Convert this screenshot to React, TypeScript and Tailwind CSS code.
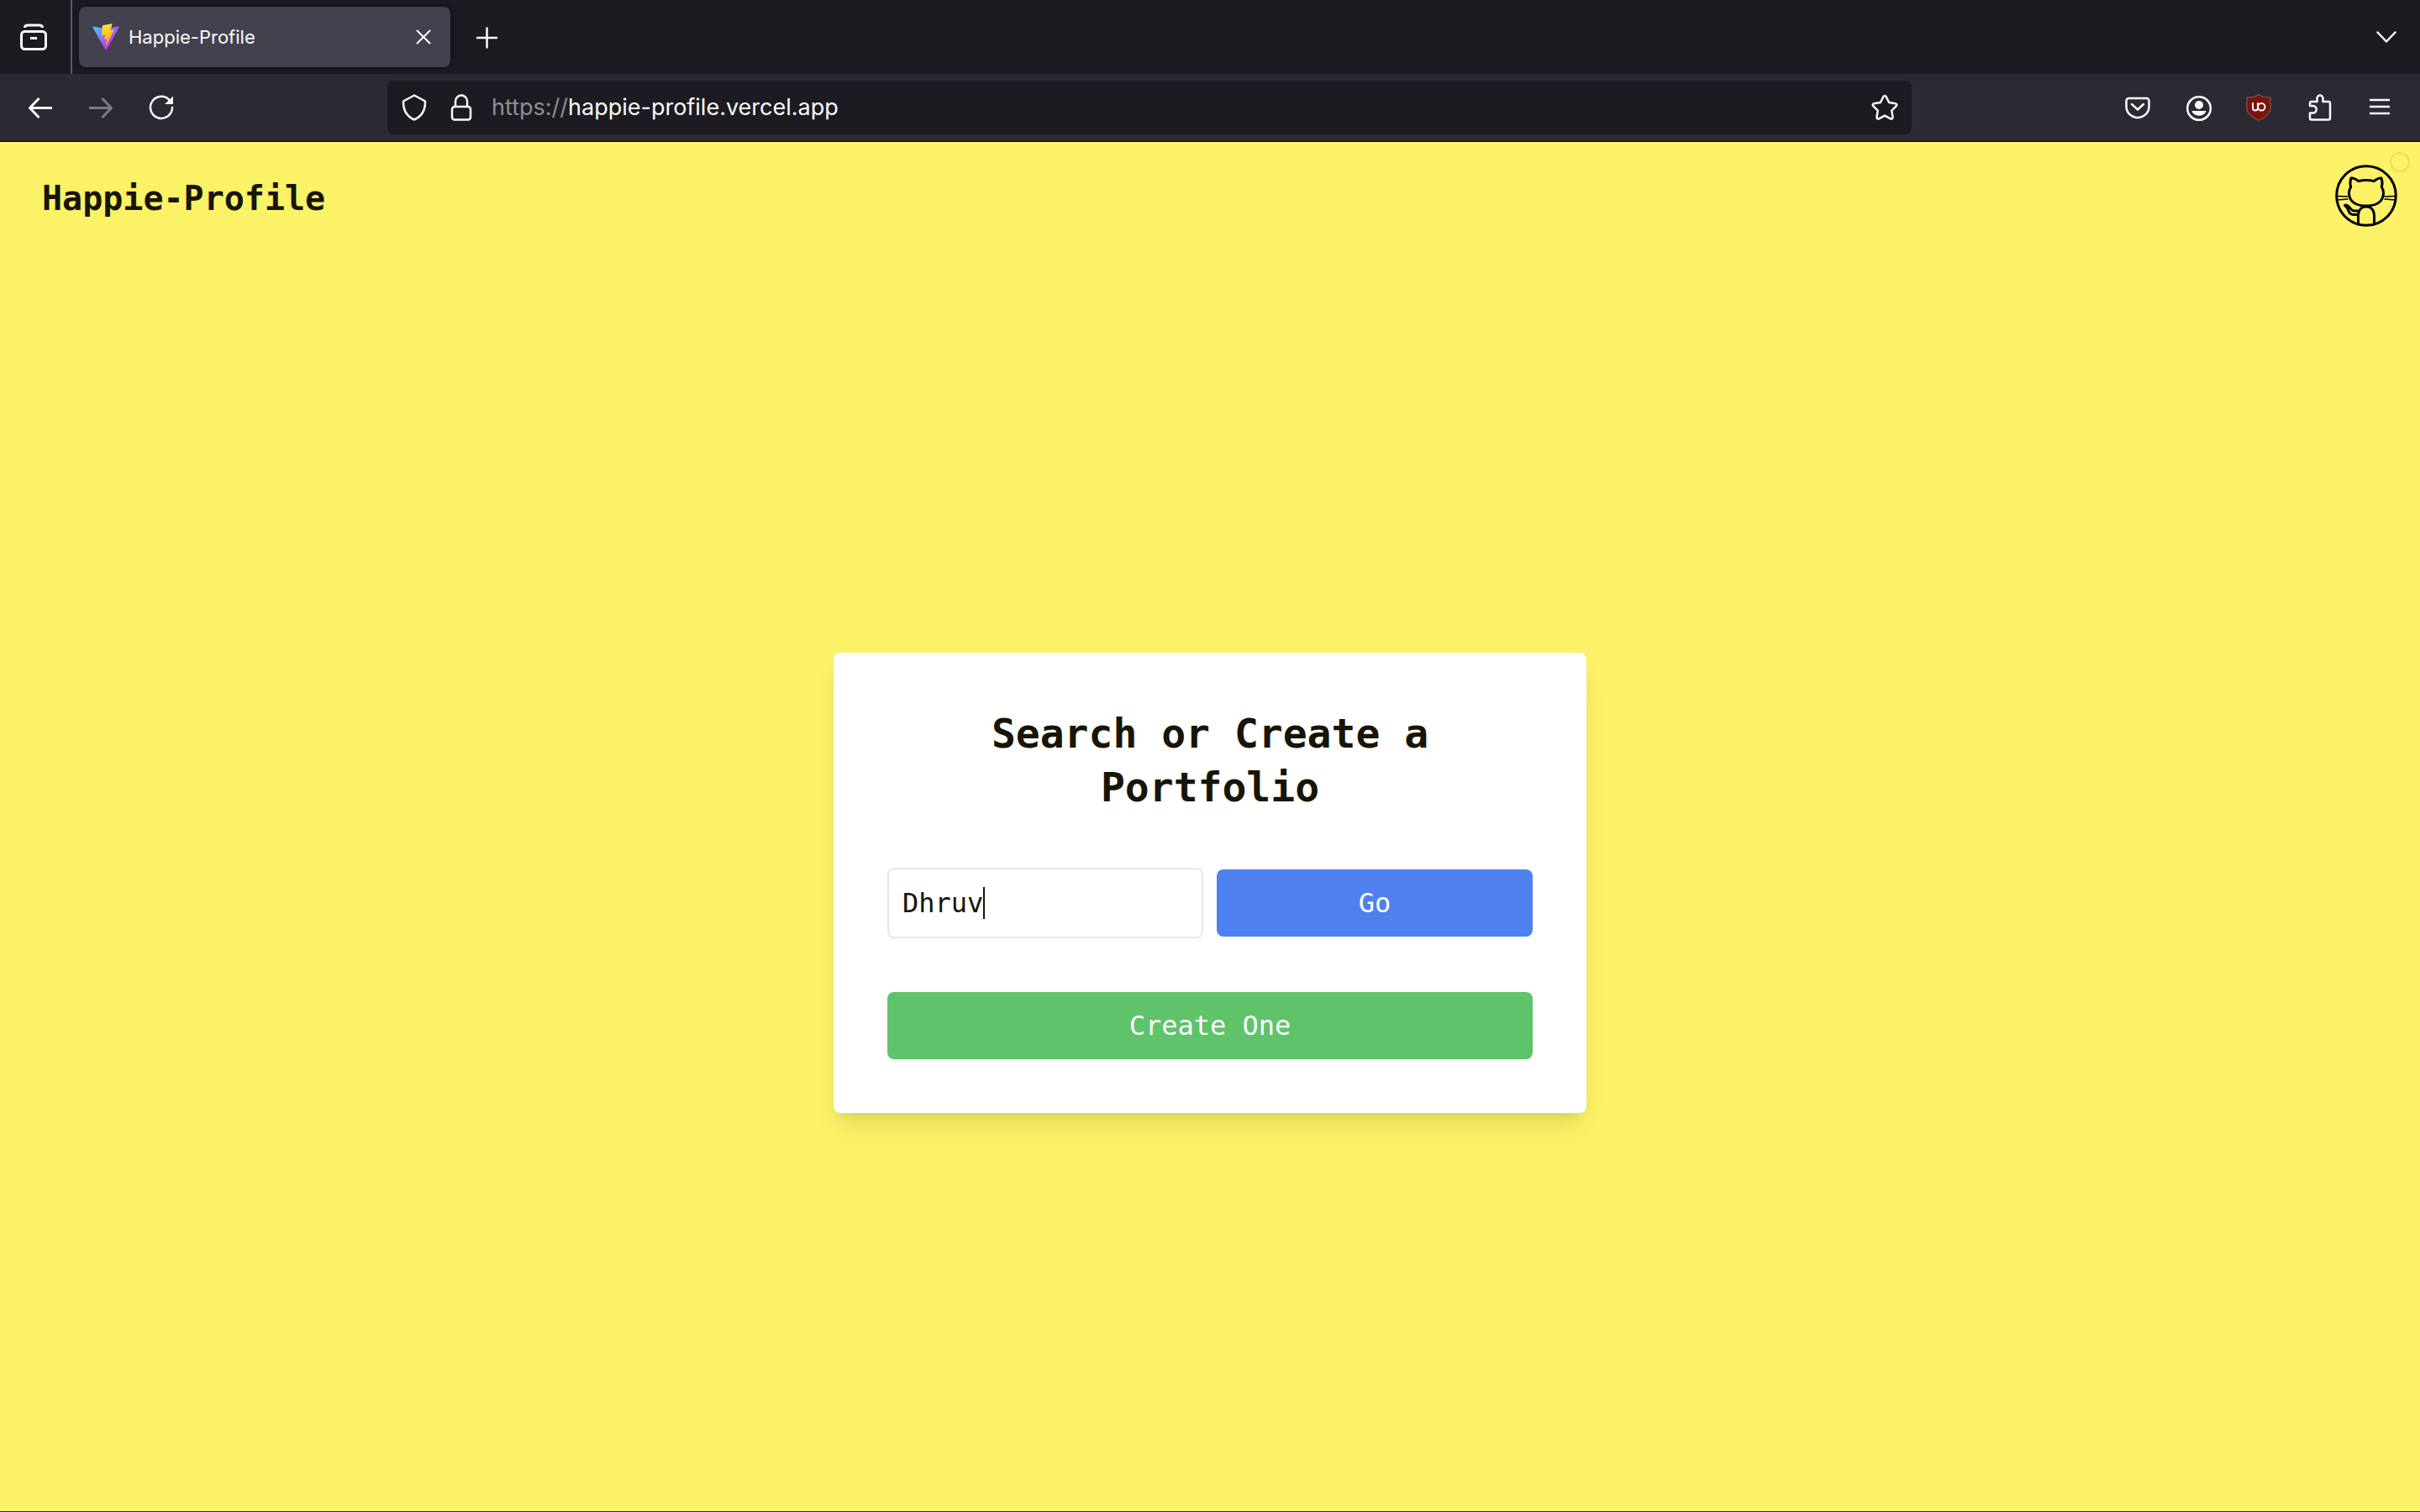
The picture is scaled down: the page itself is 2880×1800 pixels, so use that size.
import React from "react";

const iconStroke = {
  fill: "none",
  stroke: "currentColor",
  strokeWidth: 3,
  strokeLinecap: "round" as const,
  strokeLinejoin: "round" as const,
};

function Icon({ children, className = "" }: { children: React.ReactNode; className?: string }) {
  return (
    <svg viewBox="0 0 32 32" className={`block size-8 shrink-0 ${className}`} aria-hidden="true" {...iconStroke}>
      {children}
    </svg>
  );
}

function ViteLogo() {
  return (
    <svg viewBox="6 0 398 398" className="block size-8 shrink-0" aria-hidden="true">
      <defs>
        <linearGradient id="vite-body" gradientUnits="userSpaceOnUse" x1="6" y1="33" x2="235" y2="344">
          <stop offset="0" stopColor="#41d1ff" />
          <stop offset="1" stopColor="#bd34fe" />
        </linearGradient>
        <linearGradient id="vite-bolt" gradientUnits="userSpaceOnUse" x1="195" y1="9" x2="236" y2="293">
          <stop offset="0" stopColor="#ffea83" />
          <stop offset="0.083" stopColor="#ffdd35" />
          <stop offset="1" stopColor="#ffa800" />
        </linearGradient>
      </defs>
      <path
        d="M399.641 59.525 215.643 388.545c-3.799 6.793-13.559 6.833-17.415.073L10.582 59.556c-4.201-7.366 2.098-16.289 10.446-14.797l184.195 32.923a10 10 0 0 0 3.553-.006l180.343-32.870c8.320-1.517 14.649 7.337 10.522 14.719Z"
        fill="url(#vite-body)"
      />
      <path
        d="M292.965 1.574 156.801 28.255a5 5 0 0 0-4.030 4.611l-8.376 141.464c-.197 3.332 2.863 5.918 6.115 5.168l37.910-8.749c3.547-.818 6.752 2.306 6.023 5.873l-11.263 55.153c-.758 3.712 2.727 6.886 6.352 5.785l23.415-7.114c3.630-1.102 7.118 2.081 6.350 5.796l-17.899 86.633c-1.120 5.419 6.088 8.374 9.094 3.728l2.008-3.103 110.954-221.428c1.858-3.708-1.346-7.935-5.418-7.149l-39.022 7.531c-3.667.707-6.787-2.708-5.752-6.296l25.469-88.291c1.036-3.594-2.095-7.012-5.766-6.293Z"
        fill="url(#vite-bolt)"
      />
    </svg>
  );
}

function OctocatMark() {
  return (
    <svg viewBox="0 0 74 74" className="block size-[74px]" aria-hidden="true" fill="none" stroke="#000" strokeWidth="3" strokeLinecap="round" strokeLinejoin="round">
      <circle cx="37" cy="37" r="35.300" />
      <path d="M19 16c3-.5 6 1.500 9 3.700 5-1.700 13-1.700 18 0 3-2.200 6-4.200 9-3.700 1.300 4 1.300 7.500.3 10.500 2 3 2.700 7 1.700 11-2 8-10 11.500-20 11.500s-18-3.500-20-11.500c-1-4-.3-8 1.700-11-1-3-1-6.500.3-10.500Z" />
      <path d="M27.500 71V61c0-7 3.500-11 9.500-11s9.500 4 9.500 11v10M27 59.500h-6c-6 0-4-7.500-9.500-11M27 55h-4.500c-4.500 0-4-5.500-10-7" />
      <path strokeWidth="1.500" d="M3 37.500 15 38M3 42l12-1M59 38l12-.5M59 41l12 1" />
    </svg>
  );
}

function ToolbarButton({ label, children, className = "" }: { label: string; children: React.ReactNode; className?: string }) {
  return (
    <button type="button" aria-label={label} className={`grid size-8 shrink-0 place-items-center ${className}`}>
      {children}
    </button>
  );
}

function TabBar() {
  return (
    <div className="flex h-[88px] items-center bg-[#1c1b22] text-[#fbfbfe]">
      <div className="flex h-full w-[86px] shrink-0 items-center border-r-2 border-[#5b5a63] pl-6">
        <ToolbarButton label="Firefox View">
          <Icon>
            <rect x="1.500" y="9.500" width="29" height="21" rx="4" />
            <path strokeLinecap="butt" d="M5.500 5c0-2 1.500-3 3.500-3h14c2 0 3.500 1 3.500 3M12 17.500h8" />
          </Icon>
        </ToolbarButton>
      </div>
      <div className="ml-2 flex h-[72px] w-[442px] items-center rounded-lg bg-[#42414d] px-4 shadow-[0_0_6px_rgba(0,0,0,0.5)]">
        <ViteLogo />
        <span className="ml-[11px] flex-1 font-[Inter,sans-serif] text-[22px] leading-8">Happie-Profile</span>
        <ToolbarButton label="Close tab">
          <Icon>
            <path strokeWidth="2" d="m8.500 8.500 15 15m0-15-15 15" />
          </Icon>
        </ToolbarButton>
      </div>
      <ToolbarButton label="New tab" className="ml-7">
        <Icon>
          <path strokeWidth="2.500" d="M15.500 5.500v23M4 17h23" />
        </Icon>
      </ToolbarButton>
      <ToolbarButton label="List all tabs" className="mr-6 ml-auto">
        <Icon>
          <path strokeWidth="2.500" d="m5.500 10.500 10.500 11 10.500-11" />
        </Icon>
      </ToolbarButton>
    </div>
  );
}

function NavBar() {
  return (
    <div className="flex h-[81px] items-center border-b border-black bg-[#2b2a33] text-[#fbfbfe]">
      <div className="flex w-[461px] shrink-0 items-center gap-10 pl-8">
        <ToolbarButton label="Back">
          <Icon>
            <path strokeLinecap="butt" d="M30 16.500H4M14.500 5 3.500 16.500l11 11.500" />
          </Icon>
        </ToolbarButton>
        <ToolbarButton label="Forward" className="text-[#7d7c82]">
          <Icon>
            <path strokeLinecap="butt" d="M2 16.500h26M17.500 5l11 11.500-11 11.500" />
          </Icon>
        </ToolbarButton>
        <ToolbarButton label="Reload">
          <Icon>
            <path strokeWidth="2.500" d="M29 16a13 13 0 1 1-4-9.500" />
            <path fill="currentColor" stroke="none" d="M30 2.500V12H20Z" />
          </Icon>
        </ToolbarButton>
      </div>
      <div className="flex h-16 flex-1 items-center rounded-lg bg-[#1c1b22] px-4">
        <ToolbarButton label="Tracking protection">
          <Icon>
            <path strokeWidth="2.500" d="M16 1.500 29 8.500c.3 10.500-4 18-13 22-9-4-13.300-11.500-13-22Z" />
          </Icon>
        </ToolbarButton>
        <ToolbarButton label="Connection secure" className="ml-6">
          <Icon>
            <rect x="5" y="15" width="22" height="15.500" rx="3" strokeWidth="2.500" />
            <path strokeWidth="2.500" d="M9 15V8.500a7 7 0 0 1 14 0V15" />
          </Icon>
        </ToolbarButton>
        <div className="ml-5 flex-1 font-[Inter,sans-serif] text-[27px] leading-10">
          <span className="text-[#8f8e94]">https://</span>happie-profile.vercel.app
        </div>
        <ToolbarButton label="Bookmark this page">
          <Icon>
            <path strokeWidth="2.500" d="M14.400 3c.7-1.300 2.500-1.300 3.200 0l3.500 7 7.700 1.200c1.500.2 2 2 1 3l-5.500 5.500 1.200 7.700c.2 1.500-1.200 2.500-2.500 1.900L16 25.700l-7 3.600c-1.300.6-2.700-.4-2.500-1.900l1.200-7.700-5.500-5.500c-1-1-.5-2.800 1-3L10.900 10Z" />
          </Icon>
        </ToolbarButton>
      </div>
      <div className="flex w-[605px] shrink-0 items-center justify-end gap-10 pr-8">
        <ToolbarButton label="Save to Pocket">
          <Icon>
            <path strokeWidth="2.500" d="M5.500 5h21a3 3 0 0 1 3 3v7a13.500 13 0 0 1-27 0V8a3 3 0 0 1 3-3ZM9 12l7 6.500 7-6.500" />
          </Icon>
        </ToolbarButton>
        <ToolbarButton label="Account">
          <Icon>
            <circle cx="17" cy="17" r="13.800" strokeWidth="2.500" />
            <circle cx="17" cy="13" r="5" fill="currentColor" stroke="none" />
            <path fill="currentColor" stroke="none" d="M9.500 20h15c1 0 1 .5.600 1.200a9.500 9.500 0 0 1-16.200 0C8.500 20.500 8.500 20 9.500 20Z" />
          </Icon>
        </ToolbarButton>
        <ToolbarButton label="uBlock Origin">
          <Icon>
            <path fill="#7b140c" stroke="#8d6060" strokeWidth="1" d="M16 .5c4 3 9 3.500 14 3.500v13c0 7-8 11.500-14 14.500C10 28.500 2 24 2 17V4c5 0 10-.5 14-3.500Z" />
            <path strokeWidth="2" d="M9 11v5.500c0 2 1 3 3 3s3-1 3-3V11" />
            <circle cx="19.300" cy="15.300" r="4.200" strokeWidth="2" />
          </Icon>
        </ToolbarButton>
        <ToolbarButton label="Extensions">
          <Icon>
            <path strokeWidth="2.500" d="M5 14v-3c0-1 .5-2 2-2h6.500V5a3.500 3.500 0 0 1 7 0v4H27c1.500 0 2 1 2 2v17.500c0 1.500-.5 2-2 2H7c-1.500 0-2-.5-2-2v-6h3.500a3.500 3.500 0 0 0 0-8.500Z" />
          </Icon>
        </ToolbarButton>
        <ToolbarButton label="Open menu">
          <Icon>
            <path strokeWidth="2.500" d="M5 7h22M5 15h22M5 23h22" />
          </Icon>
        </ToolbarButton>
      </div>
    </div>
  );
}

export default function App() {
  return (
    <div className="flex min-h-screen flex-col border-b border-[#2b2a33] bg-[#fcf267]">
      <TabBar />
      <NavBar />
      <header className="relative flex h-[134px] items-center justify-between pr-[27px] pl-[50px] font-['DejaVu_Sans_Mono',monospace] text-[#171505]">
        <h1 className="text-[40px] leading-[56px] font-bold">Happie-Profile</h1>
        <a href="#github" aria-label="GitHub" className="mb-1.5">
          <OctocatMark />
        </a>
        <span className="absolute top-3 right-3 size-6 rounded-full border-2 border-[#ebe05c]" />
      </header>
      <main className="flex flex-1 items-center justify-center font-['DejaVu_Sans_Mono',monospace] text-[32px] leading-[48px] text-[#171505]">
        <section className="flex w-full max-w-4xl flex-col gap-16 rounded-lg bg-white p-16 shadow-[0_20px_30px_-6px_rgba(0,0,0,0.1),0_8px_12px_-8px_rgba(0,0,0,0.1)]">
          <h2 className="text-center text-[48px] leading-[64px] font-bold">Search or Create a Portfolio</h2>
          <form className="grid grid-cols-2 items-center gap-4" onSubmit={(e) => e.preventDefault()}>
            <div className="relative">
              <input
                type="text"
                aria-label="Portfolio name"
                defaultValue="Dhruv"
                className="block h-[84px] w-full rounded-lg border-2 border-gray-200 bg-white px-4 caret-transparent outline-none"
              />
              <span className="absolute top-[23px] left-[114px] h-[38px] w-[2px] bg-[#171505]" />
            </div>
            <button type="submit" className="h-20 rounded-lg bg-[#4f81ee] text-white">
              Go
            </button>
          </form>
          <button type="button" className="h-20 rounded-lg bg-[#5fc36a] text-white">
            Create One
          </button>
        </section>
      </main>
    </div>
  );
}
